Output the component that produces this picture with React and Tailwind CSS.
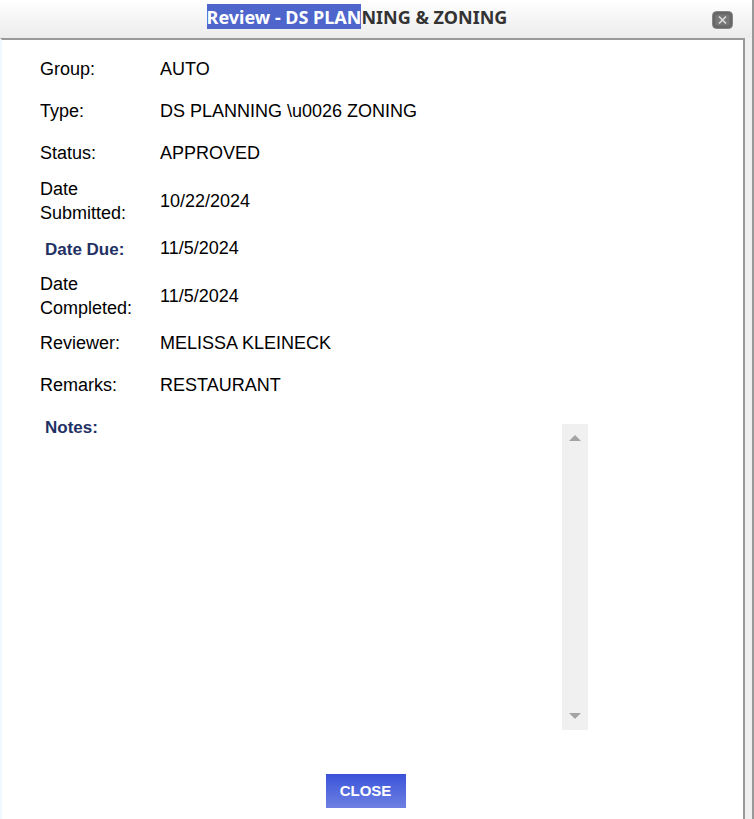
import React from "react";

const rows = [
  { label: "Group:", value: "AUTO" },
  { label: "Type:", value: "DS PLANNING \\u0026 ZONING" },
  { label: "Status:", value: "APPROVED" },
  { label: "Date Submitted:", value: "10/22/2024", tall: true },
  { label: "Date Due:", value: "11/5/2024", strong: true },
  { label: "Date Completed:", value: "11/5/2024", tall: true },
  { label: "Reviewer:", value: "MELISSA KLEINECK" },
  { label: "Remarks:", value: "RESTAURANT" },
];

function ScrollTrack() {
  return (
    <div className="flex w-[26px] flex-col items-center justify-between bg-[#f0f0f0] py-[11px]">
      <svg width="12" height="6" viewBox="0 0 12 6" fill="#a3a3a3">
        <path d="M6 0L12 6H0Z" />
      </svg>
      <svg width="12" height="6" viewBox="0 0 12 6" fill="#a3a3a3">
        <path d="M0 0H12L6 6Z" />
      </svg>
    </div>
  );
}

function App() {
  return (
    <div className="flex min-h-screen flex-col border-r-2 border-[#999999] bg-[#efefef] font-['Liberation_Sans',Arial,sans-serif] text-lg leading-6 text-black">
      {/* Title bar */}
      <header className="flex h-[38px] items-start bg-linear-to-b from-white to-[#ececec] pr-[19px]">
        <h1 className="flex-1 pt-1 pl-[2px] text-center font-['Noto_Sans','Open_Sans',sans-serif] text-lg leading-6 font-bold whitespace-nowrap text-[#333333]">
          <span className="inline-block bg-[#4e66cc] pt-px leading-[24px] text-white">Review - DS PLAN</span>NING &amp; ZONING
        </h1>
        <button type="button" aria-label="Close dialog" className="mt-[11px]">
          <svg width="21" height="18" viewBox="0 0 21 18" fill="none">
            <rect x="0.5" y="0.5" width="20" height="17" rx="4" fill="#666666" stroke="#858585" />
            <rect x="3" y="3" width="15" height="12" rx="2" fill="#777777" stroke="#686868" />
            <path d="M7 5.5L14 12.5M14 5.5L7 12.5" stroke="#dddddd" strokeWidth="1.6" />
          </svg>
        </button>
      </header>

      {/* Review details */}
      <main className="mr-[7px] flex-1 border-t-2 border-r-2 border-l-2 border-t-[#999999] border-r-[#999999] border-l-[#f0f9ff] bg-white pt-2 pl-[38px]">
        <table className="border-collapse text-left">
          <tbody>
            {rows.map((row) => (
              <tr key={row.label} className={row.tall ? "h-[53px]" : "h-[42px]"}>
                <th
                  scope="row"
                  className={
                    row.strong
                      ? "w-[120px] pt-1 pl-[5px] text-[17px] font-bold text-[#1f3164]"
                      : "w-[120px] pr-4 font-normal"
                  }
                >
                  {row.label}
                </th>
                <td>{row.value}</td>
              </tr>
            ))}
            <tr>
              <th scope="row" className="pt-[10px] pl-[5px] align-top text-[17px] font-bold text-[#1f3164]">
                <label htmlFor="notes">Notes:</label>
              </th>
              <td className="pt-[18px]">
                <div className="flex h-[306px]">
                  <textarea
                    id="notes"
                    readOnly
                    className="w-[402px] resize-none overflow-hidden bg-white outline-none"
                  />
                  <ScrollTrack />
                </div>
              </td>
            </tr>
          </tbody>
        </table>

        <div className="mt-11 flex justify-center pb-[11px]">
          <button
            type="button"
            className="mr-[52px] h-[34px] w-20 bg-linear-to-b from-[#3a52d8] to-[#6f80e2] text-[15px] font-bold text-white"
          >
            CLOSE
          </button>
        </div>
      </main>
    </div>
  );
}

export default App;
